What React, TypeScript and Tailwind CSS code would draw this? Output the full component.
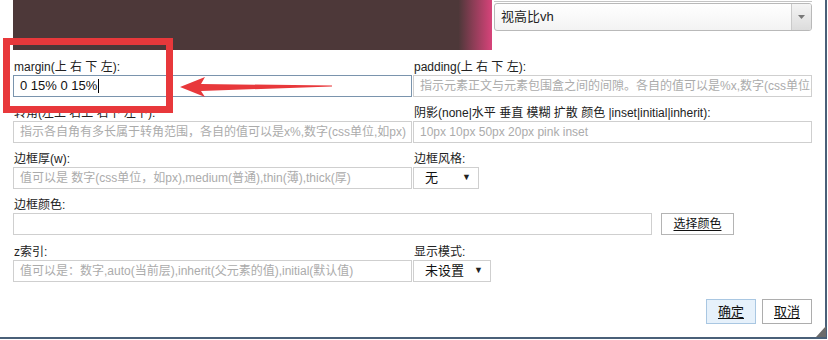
const font = { fontFamily: '"Liberation Sans", "Noto Sans CJK SC", sans-serif' }

const Label = ({ text }: { text: string }) => (
  <div className="h-[24px] flex items-end pb-[1px] pl-[1px] text-[12px] leading-[14px] text-[#222]">{text}</div>
)

const TextBox = ({
  placeholder,
  value,
  focused,
  className = 'w-[399px]',
}: {
  placeholder?: string
  value?: string
  focused?: boolean
  className?: string
}) => (
  <div
    className={`h-[22px] flex items-center px-[6px] whitespace-nowrap overflow-hidden border ${
      focused ? 'border-[#7a94ad]' : 'border-[#cfcfcf]'
    } ${className}`}
  >
    {value ? (
      <span className="text-[13px] text-[#111] flex items-center">
        {value}
        <span className="inline-block w-[1px] h-[14px] bg-black ml-[1px]" />
      </span>
    ) : (
      <span className="text-[12px] text-[#ababab]">{placeholder}</span>
    )}
  </div>
)

const MiniSelect = ({ text, width }: { text: string; width: string }) => (
  <div className={`h-[22px] flex items-center justify-between pl-[11px] pr-[7px] border border-[#cfcfcf] text-[13px] text-[#111] ${width}`}>
    <span>{text}</span>
    <span className="text-[9px] text-[#222]">▼</span>
  </div>
)

const Field = ({ label, children }: { label: string; children: React.ReactNode }) => (
  <div className="w-[400px] h-[46px]">
    <Label text={label} />
    {children}
  </div>
)

export default function App() {
  return (
    <div style={font} className="relative w-[828px] h-[340px] bg-white overflow-hidden">
      <div className="w-[827px] h-[339px] border-r-2 border-b-2 border-[#4a6078] bg-white flex flex-col">
        {/* top strip */}
        <div className="h-[51px] flex">
          <div className="ml-[13px] w-[479px] h-[50px] bg-[linear-gradient(to_right,#4d3839_0%,#4d3839_93%,#8a3d55_96%,#d7437a_100%)]" />
          <div className="ml-[2px] w-[318px] flex flex-col">
            <div className="h-[2px] border-b border-[#c4c4c4]" />
            <div className="mt-[1px] h-[28px] flex rounded-[3px] border border-[#b9b9b9] bg-[linear-gradient(to_bottom,#ffffff,#f3f3f3)] overflow-hidden">
              <div className="flex-1 flex items-center pl-[6px] text-[13px] text-[#222]">视高比vh</div>
              <div className="w-[20px] border-l border-[#cacaca] bg-[linear-gradient(to_bottom,#f4f4f4,#dcdcdc)] flex items-center justify-center">
                <svg width="7" height="4" viewBox="0 0 7 4">
                  <path d="M0 0h7L3.5 4z" fill="#777" />
                </svg>
              </div>
            </div>
          </div>
        </div>

        {/* form */}
        <div className="pl-[13px] flex flex-col">
          <div className="flex">
            <Field label="margin(上 右 下 左):">
              <TextBox value="0 15% 0 15%" focused />
            </Field>
            <Field label="padding(上 右 下 左):">
              <TextBox placeholder="指示元素正文与元素包围盒之间的间隙。各自的值可以是%x,数字(css单位,如px)" />
            </Field>
          </div>
          <div className="flex">
            <Field label="转角(左上 右上 右下 左下):">
              <TextBox placeholder="指示各自角有多长属于转角范围，各自的值可以是x%,数字(css单位,如px)" />
            </Field>
            <Field label="阴影(none|水平 垂直 模糊 扩散 颜色 |inset|initial|inherit):">
              <TextBox placeholder="10px 10px 50px 20px pink inset" />
            </Field>
          </div>
          <div className="flex">
            <Field label="边框厚(w):">
              <TextBox placeholder="值可以是 数字(css单位，如px),medium(普通),thin(薄),thick(厚)" />
            </Field>
            <Field label="边框风格:">
              <MiniSelect text="无" width="w-[66px]" />
            </Field>
          </div>
          <div className="h-[47px]">
            <Label text="边框颜色:" />
            <div className="flex items-center gap-[9px]">
              <TextBox className="w-[639px]" />
              <div className="h-[22px] w-[73px] border border-[#b4b4b4] flex items-center justify-center text-[12px] text-[#111] underline underline-offset-2">
                选择颜色
              </div>
            </div>
          </div>
          <div className="flex">
            <Field label="z索引:">
              <TextBox placeholder="值可以是：数字,auto(当前层),inherit(父元素的值),initial(默认值)" />
            </Field>
            <Field label="显示模式:">
              <MiniSelect text="未设置" width="w-[78px]" />
            </Field>
          </div>
        </div>

        {/* actions */}
        <div className="mt-[17px] flex justify-end gap-[6px] pr-[13px]">
          <div className="w-[50px] h-[25px] border border-[#a9c7e2] bg-[#e6f1fb] flex items-center justify-center text-[13px] text-[#111] underline underline-offset-2">
            确定
          </div>
          <div className="w-[50px] h-[25px] border border-[#adadad] bg-white flex items-center justify-center text-[13px] text-[#111] underline underline-offset-2">
            取消
          </div>
        </div>
      </div>

      {/* resize grip */}
      <svg className="absolute left-[816px] top-[326px]" width="10" height="11" viewBox="0 0 10 11">
        <path d="M10 0V11H0z" fill="#6b6b6b" />
      </svg>

      {/* annotation */}
      <div className="absolute left-[3px] top-[38px] w-[170px] h-[75px] border-[7px] border-[#e8383b]" />
      <svg className="absolute left-[178px] top-[74px]" width="160" height="26" viewBox="0 0 160 26">
        <path d="M2 13 L27 3 L23 10 L154 11.5 L154 12.5 L23 17 L27 23 Z" fill="#e8383b" />
      </svg>
    </div>
  )
}
